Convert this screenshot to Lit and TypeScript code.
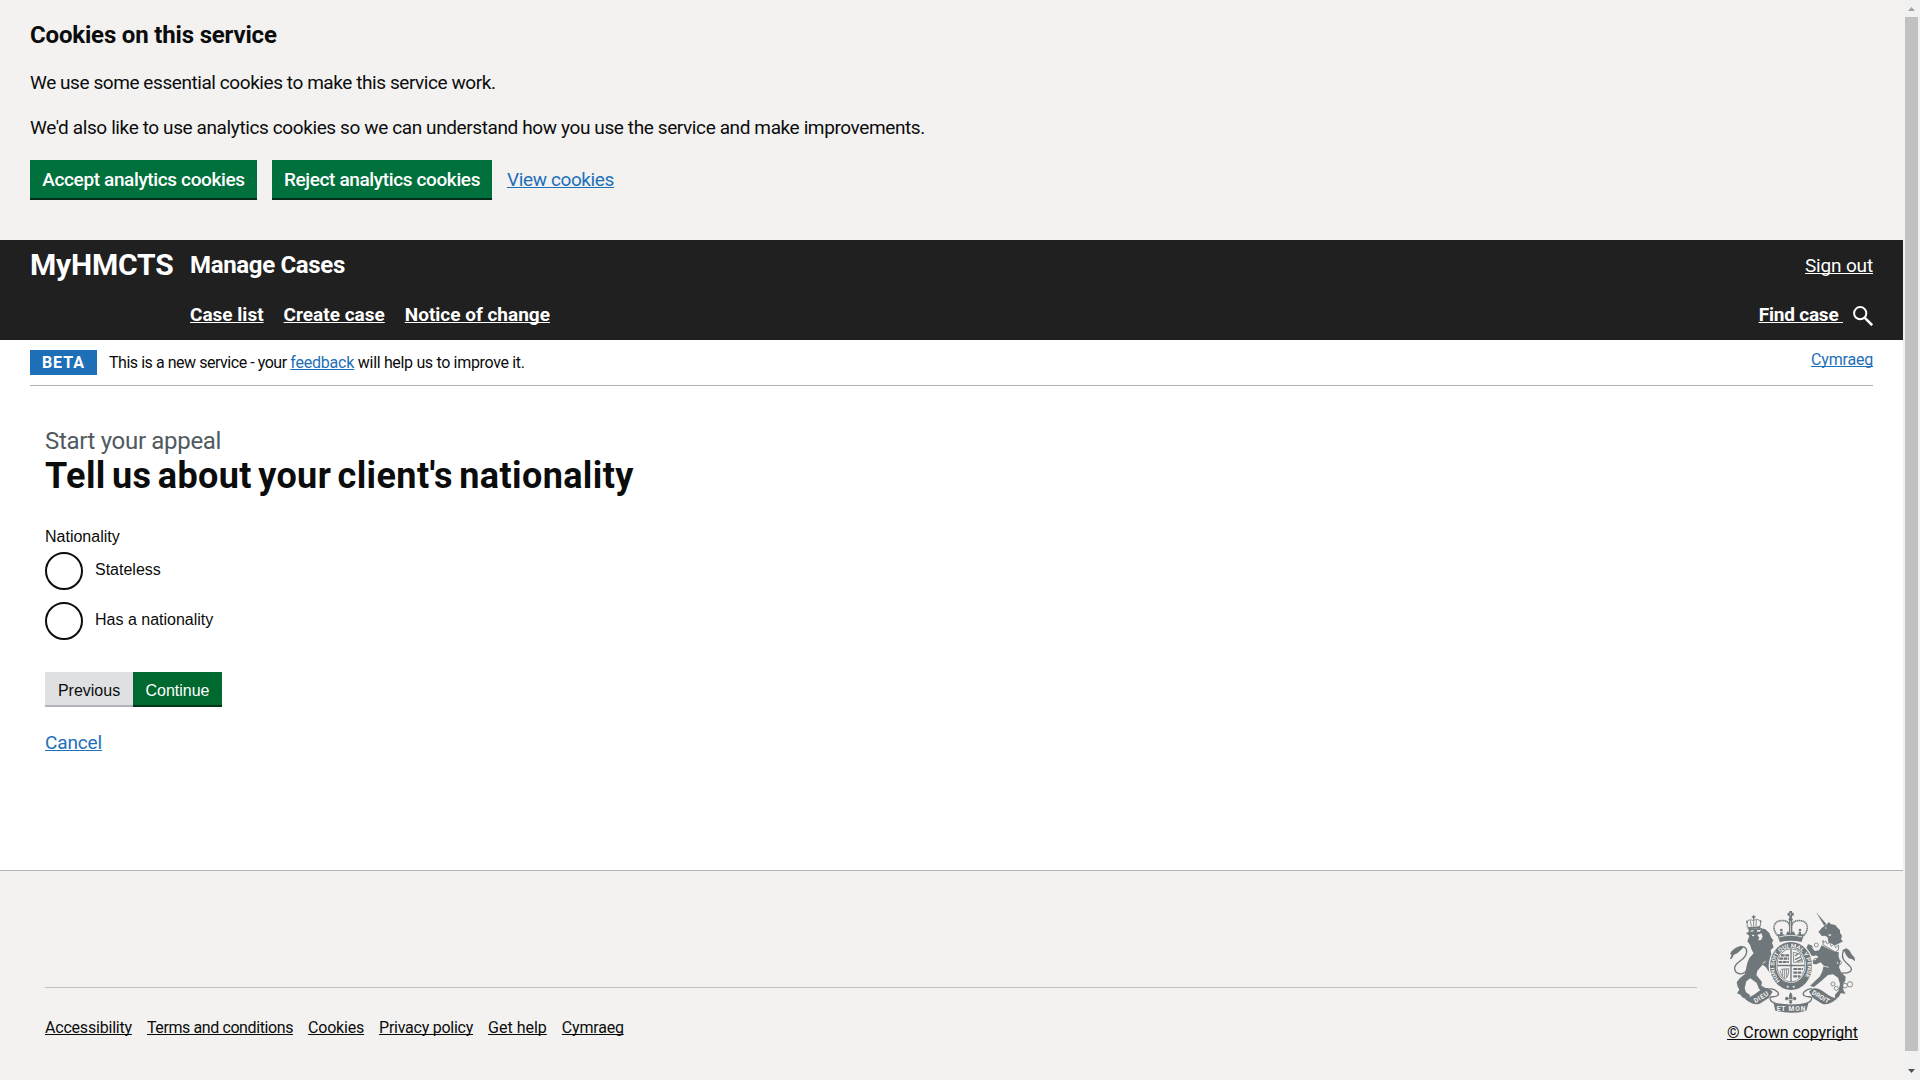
import { LitElement, html, css, svg } from "lit";
import { customElement } from "lit/decorators.js";

@customElement("royal-crest")
export class RoyalCrest extends LitElement {
  static styles = css`
    :host { display: block; width: 125px; height: 102px; }
    svg { display: block; width: 125px; height: 102px; }
    .fill { fill: #6f777b; }
    .pale { fill: #f3f2f1; }
    .line { fill: none; stroke: #6f777b; stroke-width: 4; stroke-linecap: round; }
    .thin { fill: none; stroke: #6f777b; stroke-width: 2.4; }
    .cut { fill: none; stroke: #f3f2f1; stroke-width: 2.5; }
    .beads { fill: none; stroke: #6f777b; stroke-width: 5; stroke-dasharray: 4 1.5; }
    .charge { fill: none; stroke: #6f777b; stroke-width: 6.5; stroke-dasharray: 11 2; }
    .motto { fill: #f3f2f1; font: 700 20px Roboto, sans-serif; }
    .garter { fill: #f3f2f1; font: 700 16px Roboto, sans-serif; }
  `;

  private lion() {
    return svg`
      <path class="fill" d="M80 75 L84 88 L121 84 L122 72 L118 79 L80 82Z"/>
      <path class="thin" d="M84 80 C76 64 86 55 100 62 C114 53 127 62 120 78 M94 79 L91 62 M108 78 L109 60 M101 62 V80"/>
      <path class="line" d="M101 47 V58 M97 51 H105 M81 63 V68 M122 62 V66"/>
      <path class="fill" d="M86 87 L121 84 L136 88 L148 99 L153 112 L160 121 L156 129 L161 141
        L152 151 L153 160 L164 174 L166 188 L158 193 L153 207 L163 214 L160 222 L149 218 L137 201
        L128 194 L112 212 L109 225 L126 246 L124 257 L137 264 L149 266 L151 276 L133 278 L117 267
        L110 249 L91 235 L79 244 L74 265 L78 277 L90 285 L88 294 L68 293 L61 284 L51 280
        L58 269 L53 260 L50 247 L60 234 L75 222 L78 207 L82 188 L88 174 L101 160 L95 149
        L90 134 L82 124 L88 108 L78 99 L86 96Z"/>
      <path class="pale" d="M91 92 L101 90 L100 94 L92 95Z M111 91 L124 89 L118 95 L111 95Z M112 105 L124 100 L128 110 L123 120 L114 121 L118 113Z M97 104 L104 105 L101 109 L96 108Z"/>
      <path class="cut" d="M153 176 L158 180 M128 190 L137 184"/>
      <path class="fill" d="M62 137 L70 143 L62 151 L52 160 L42 164 L34 178 L30 176 L35 164 L30 162 L35 153 L46 144Z"/>
      <path class="line" d="M62 140 C82 139 84 155 75 169 C67 183 42 189 44 206 C46 225 70 226 80 211"/>`;
  }

  private unicorn() {
    return svg`
      <path class="fill" d="M288 36 L319 72 L313 78Z"/>
      <path class="fill" d="M299 100 L295 96 L306 83 L318 75 L327 66 L332 72 L346 75 L353 84 L360 90 L360 98 L366 107
        L363 118 L369 124 L361 128 L346 136 L325 127 L323 112 L314 107 L305 108Z"/>
      <path class="pale" d="M313 84 L319 82 L320 86Z M323 104 L335 103 L330 109Z"/>
      <path class="thin" d="M309 121 L311 128 L317 123 L322 132 L329 127 L334 139 L342 132 L347 143 L356 135 L355 150 L346 156 L309 134Z"/>
      <path class="fill" d="M305 136 L321 144 L344 155 L356 156 L356 171 L361 184 L357 202 L364 218 L377 230 L376 242
        L369 253 L370 270 L377 281 L362 280 L356 292 L345 294 L345 284 L355 273 L360 252 L354 233 L339 223
        L324 225 L303 244 L282 261 L270 258 L282 246 L300 229 L307 214 L311 197 L302 187 L289 193
        L278 192 L273 181 L286 181 L295 170 L286 165 L276 168 L267 156 L258 146 L264 133
        L275 136 L284 153 L297 151Z"/>
      <circle class="thin" cx="289" cy="135" r="6"/><circle class="thin" cx="282" cy="161" r="6"/>
      <circle class="thin" cx="288" cy="182" r="7"/><circle class="thin" cx="357" cy="188" r="7"/>
      <path class="cut" d="M310 198 L326 202 M276 143 L284 151 M351 185 L354 192"/>
      <path class="line" d="M366 219 C390 222 400 211 390 199 C378 187 363 178 368 160 C370 151 375 148 381 150"/>
      <path class="fill" d="M366 151 L379 145 L388 151 L395 163 L404 173 L405 184 L397 178 L386 175 L378 165 L373 154Z"/>
      <circle class="thin" cx="339" cy="252" r="6"/><circle class="thin" cx="349" cy="265" r="6"/>
      <circle class="thin" cx="375" cy="257" r="7"/><circle class="thin" cx="390" cy="253" r="8"/>`;
  }

  private crown() {
    return svg`
      <path class="fill" d="M208 33 H216 V38 H221 V47 H216 V53 H208 V47 H203 V38 H208Z"/>
      <path class="pale" d="M211 40 H213 V46 H211Z"/>
      <circle class="fill" cx="212" cy="58" r="6"/>
      <path class="beads" d="M173 107 C155 87 160 64 182 62 C195 60 207 65 208 76"/>
      <path class="beads" d="M251 107 C269 87 264 64 242 62 C229 60 217 65 216 76"/>
      <path class="line" d="M209 64 V103 M215 64 V103"/>
      <path class="fill" d="M176 118 L172 103 L181 103 L181 95 L188 95 L188 102 L197 106 L203 94 L212 99 L221 94 L227 106
        L236 102 L236 95 L243 95 L243 103 L252 103 L248 118 Q212 108 176 118Z"/>
      <path class="cut" d="M177 111 Q212 101 247 111"/>
      <path class="fill" d="M177 116 Q212 107 247 116 L245 126 Q212 118 179 126Z"/>
      <circle class="fill" cx="184" cy="90" r="4"/><circle class="fill" cx="240" cy="90" r="4"/>`;
  }

  private shield() {
    return svg`
      <ellipse class="pale" cx="213" cy="198" rx="67" ry="75"/>
      <ellipse class="fill" cx="213" cy="198" rx="63" ry="72"/>
      <ellipse class="pale" cx="213" cy="196" rx="45" ry="53"/>
      <ellipse class="thin" cx="213" cy="196" rx="42" ry="50"/>
      <path class="fill" d="M211 147 H215 V194 H254 V199 H215 V246 H211 V199 H172 V194 H211Z"/>
      <path class="charge" d="M183 166 H207 M178 176 H207 M176 186 H207"/>
      <path class="charge" d="M220 207 H249 M220 218 H247 M220 229 H241"/>
      <path class="thin" d="M220 157 L240 162 L248 186 L221 187Z"/>
      <path class="line" d="M226 167 L234 161 M226 178 L241 171 M232 184 L245 179"/>
      <path class="thin" d="M183 208 L206 206 Q207 230 196 236 Q183 230 180 211 M188 207 V230 M194 207 V234 M200 207 V232"/>
      <path id="belt" fill="none" d="M180 243 A50 57.5 0 1 1 246 243"/>
      <text class="garter" textLength="248" lengthAdjust="spacingAndGlyphs"><textPath href="#belt">HONI SOIT QUI MAL Y PENSE</textPath></text>
      <circle class="pale" cx="203" cy="260" r="3"/><circle class="pale" cx="221" cy="260" r="3"/>`;
  }

  private ribbons() {
    return svg`
      <path class="fill" d="M70 292 C84 296 94 289 106 281 C122 269 133 261 148 266 L158 275 L146 294 L119 311 Q96 319 70 292Z"/>
      <path class="fill" d="M355 292 C341 296 331 289 319 281 C303 269 292 261 277 266 L267 275 L279 294 L306 311 Q329 319 355 292Z"/>
      <path class="line" d="M151 266 C168 268 184 282 170 288 C160 293 146 286 151 299 C155 309 162 305 164 310 M274 266 C257 268 241 282 255 288 C265 293 279 286 274 299 C270 309 263 305 261 310"/>
      <path class="fill" d="M160 307 Q212 320 266 307 L259 332 Q212 345 166 332Z"/>
      <text class="motto" x="-25" y="7" textLength="48" transform="translate(124 291) rotate(-31)">DIEU</text>
      <text class="motto" x="-43" y="7" textLength="86" transform="translate(213 325)">ET MON</text>
      <text class="motto" x="-29" y="7" textLength="58" transform="translate(302 290) rotate(31)">DROIT</text>
      <path class="fill" d="M212 276 Q221 288 215 297 Q227 284 229 297 Q227 303 221 300 L215 302 L217 308 L212 312 L207 308 L209 302
        L203 300 Q197 303 195 297 Q197 284 209 297 Q203 288 212 276Z"/>
      <path class="cut" d="M203 299 H221"/>`;
  }

  render() {
    return html`<svg viewBox="30 33 375 306" role="img" aria-label="Royal coat of arms">
      ${this.lion()}${this.unicorn()}${this.ribbons()}${this.shield()}${this.crown()}
    </svg>`;
  }
}

@customElement("app-root")
export class AppRoot extends LitElement {
  static styles = css`
    :host {
      display: flex; width: 1920px; height: 1080px; overflow: hidden; background: #fff; color: #0b0c0c;
      font: 400 19px/25px Roboto, "Liberation Sans", sans-serif;
    }
    * { box-sizing: border-box; }
    h1, h2, p { margin: 0; }
    a { color: #1d70b8; text-decoration: underline; text-decoration-thickness: 1px; text-underline-offset: 1px; text-decoration-skip-ink: none; white-space: nowrap; }
    button { font: inherit; border: 0; margin: 0; cursor: pointer; white-space: nowrap; }
    .page { width: 1903px; display: flex; flex-direction: column; }

    .cookies { height: 240px; background: #f3f2f1; padding: 20px 30px; display: flex; flex-direction: column; gap: 20px; letter-spacing: -0.39px; }
    .cookies h2 { font-size: 24px; line-height: 30px; font-weight: 700; letter-spacing: -0.17px; }
    .cookies .lead { letter-spacing: -0.43px; }
    .choices { display: flex; gap: 15px; }
    .green { height: 40px; color: #fff; background: #00703c; border-bottom: 2px solid #002d18; padding: 1px 0 0; font-weight: 500; letter-spacing: -0.37px; }
    .accept { width: 227px; }
    .reject { width: 220px; }
    .choices a { padding-top: 7px; letter-spacing: -0.38px; }

    .header { height: 100px; background: #202020; color: #fff; padding: 0 30px; }
    .row { height: 50px; display: flex; align-items: center; }
    .row a { color: #fff; font-weight: 700; }
    .brand { width: 160px; font-size: 30px; font-weight: 700; letter-spacing: -0.2px; padding-bottom: 2px; }
    .service { font-size: 24px; font-weight: 700; letter-spacing: -0.33px; flex: 1; }
    .row .signout { font-weight: 400; letter-spacing: -0.16px; }
    .nav { padding-left: 160px; gap: 20px; padding-bottom: 2px; }
    .find { margin-left: auto; display: flex; align-items: center; gap: 10px; letter-spacing: -0.2px; }
    .find a { white-space: pre; }
    .find svg { display: block; width: 20px; height: 20px; margin-top: 4px; }

    .phase { height: 46px; margin: 0 30px; padding-top: 10px; border-bottom: 1px solid #b1b4b6; display: flex; font-size: 16px; line-height: 25px; letter-spacing: -0.33px; }
    .tag { width: 67px; height: 25px; margin-right: 12px; background: #1d70b8; color: #fff; font-weight: 700; letter-spacing: 1px; text-align: center; }
    .intro { letter-spacing: -0.46px; }
    .phase p a { letter-spacing: -0.19px; }
    .language { margin-left: auto; letter-spacing: -0.19px; line-height: 20px; }

    .main { height: 484px; padding: 40px 45px 0; }
    .caption { display: block; font-size: 24px; line-height: 30px; color: #505a5f; letter-spacing: -0.32px; }
    h1 { font-size: 36px; line-height: 40px; font-weight: 700; letter-spacing: 0.38px; word-spacing: -3px; }
    .field { margin-top: 31px; font: 16px/20px "Liberation Sans", Arial, sans-serif; }
    .radios { display: flex; flex-direction: column; gap: 12px; margin-top: 5px; }
    .radio { display: flex; align-items: center; gap: 12px; height: 38px; }
    .radio i { width: 38px; height: 38px; border: 2px solid #0b0c0c; border-radius: 50%; }
    .radio span { padding-bottom: 2px; }
    .actions { display: flex; margin-top: 32px; font: 16px/19px "Liberation Sans", Arial, sans-serif; }
    .actions button { height: 35px; padding: 4px 0 0; }
    .actions .previous { width: 88px; background: #dee0e2; color: #0b0c0c; border-bottom: 2px solid #b0b4b8; }
    .actions .continue { width: 89px; background: #00692f; color: #fff; border-bottom: 2px solid #003618; }
    .cancel { display: inline-block; margin-top: 23px; letter-spacing: -0.14px; }

    .footer { height: 210px; background: #f3f2f1; border-top: 1px solid #b1b4b6; padding: 40px 45px 0; display: flex; justify-content: space-between; font-size: 16px; line-height: 20px; }
    .footer a { color: #0b0c0c; }
    .meta { width: 1652px; margin-top: 76px; border-top: 1px solid #bfc1c3; padding-top: 30px; height: 60px; display: flex; gap: 15px; letter-spacing: -0.2px; }
    .terms { letter-spacing: -0.4px; }
    .privacy { letter-spacing: -0.25px; }
    .help { letter-spacing: 0; }
    .copyright { width: 131px; display: flex; flex-direction: column; align-items: center; letter-spacing: -0.09px; }
    .copyright a { margin-top: 10px; }

    .scrollbar { width: 17px; background: #f1f1f1; display: flex; flex-direction: column; align-items: center; padding: 7px 1px 0 1px; }
    .up { width: 7px; height: 4px; background: #a3a3a3; clip-path: polygon(50% 0, 100% 100%, 0 100%); }
    .thumb { width: 13px; height: 1034px; margin: 6px 0 18px; background: #c1c1c1; flex: none; }
    .down { width: 7px; height: 4px; background: #505050; clip-path: polygon(0 0, 100% 0, 50% 100%); }
  `;

  render() {
    return html`
      <div class="page">
        <section class="cookies">
          <h2>Cookies on this service</h2>
          <p class="lead">We use some essential cookies to make this service work.</p>
          <p>We'd also like to use analytics cookies so we can understand how you use the service and make improvements.</p>
          <div class="choices">
            <button class="green accept">Accept analytics cookies</button>
            <button class="green reject">Reject analytics cookies</button>
            <a>View cookies</a>
          </div>
        </section>
        <header class="header">
          <div class="row">
            <span class="brand">MyHMCTS</span>
            <span class="service">Manage Cases</span>
            <a class="signout">Sign out</a>
          </div>
          <nav class="row nav">
            <a>Case list</a>
            <a>Create case</a>
            <a>Notice of change</a>
            <span class="find"><a>Find case </a><svg viewBox="0 0 20 20" fill="none" stroke="#fff"><circle cx="7.2" cy="7.2" r="6.1" stroke-width="2"/><path d="M11.6 11.6 L19.2 19.2" stroke-width="2.6"/></svg></span>
          </nav>
        </header>
        <div class="phase">
          <strong class="tag">BETA</strong>
          <p><span class="intro">This is a new service - your </span><a>feedback</a> will help us to improve it.</p>
          <a class="language">Cymraeg</a>
        </div>
        <main class="main">
          <span class="caption">Start your appeal</span>
          <h1>Tell us about your client's nationality</h1>
          <div class="field">
            Nationality
            <div class="radios">
              <label class="radio"><i></i><span>Stateless</span></label>
              <label class="radio"><i></i><span>Has a nationality</span></label>
            </div>
          </div>
          <div class="actions">
            <button class="previous">Previous</button>
            <button class="continue">Continue</button>
          </div>
          <a class="cancel">Cancel</a>
        </main>
        <footer class="footer">
          <nav class="meta">
            <a>Accessibility</a>
            <a class="terms">Terms and conditions</a>
            <a>Cookies</a>
            <a class="privacy">Privacy policy</a>
            <a class="help">Get help</a>
            <a>Cymraeg</a>
          </nav>
          <div class="copyright">
            <royal-crest></royal-crest>
            <a>© Crown copyright</a>
          </div>
        </footer>
      </div>
      <div class="scrollbar"><div class="up"></div><div class="thumb"></div><div class="down"></div></div>
    `;
  }
}
